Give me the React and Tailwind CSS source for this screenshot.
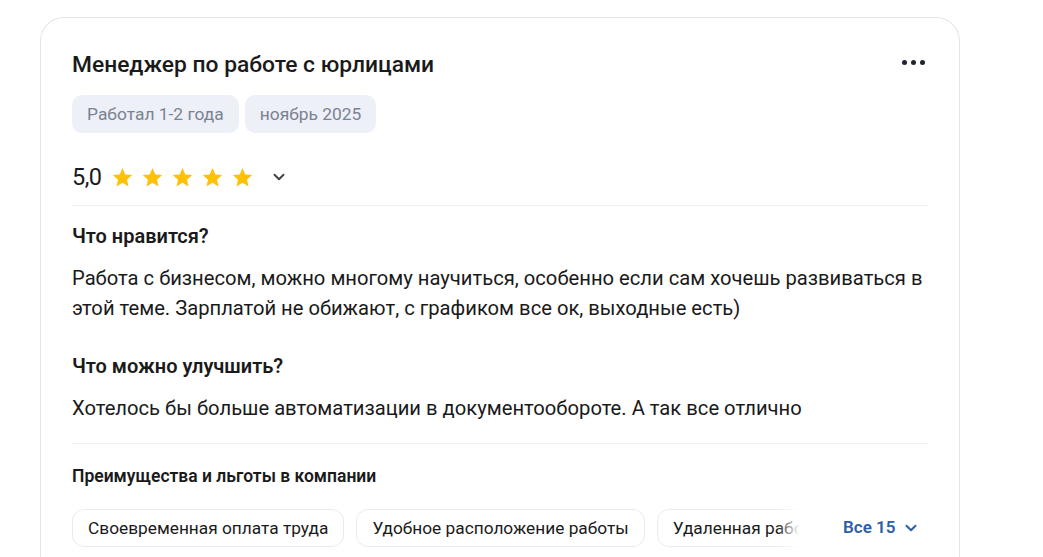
import React from 'react'

const Star = () => (
  <svg width="23" height="23" viewBox="0 0 24 24" className="shrink-0">
    <path d="M12 2.2l2.95 6.6 7.2.7-5.45 4.8 1.6 7.05L12 17.6l-6.3 3.75 1.6-7.05L1.85 9.5l7.2-.7z" fill="#ffc107" />
  </svg>
)

const Chevron = ({ className, color }) => (
  <svg width="14" height="14" viewBox="0 0 14 14" className={className}>
    <path d="M2.5 4.8L7 9.2l4.5-4.4" fill="none" stroke={color} strokeWidth="2" strokeLinecap="round" strokeLinejoin="round" />
  </svg>
)

const benefits = [
  'Своевременная оплата труда',
  'Удобное расположение работы',
  'Удаленная работа',
  'Обучение за счет компании',
]

const App = () => {
  return (
    <div className="min-h-screen bg-white pt-[17px] pl-[40px] text-[#1a1a1a]" style={{ fontFamily: 'Roboto, "Noto Sans", sans-serif' }}>
      <div className="w-[920px] rounded-t-[24px] border border-b-0 border-[#e1e4ee] px-[31px] pt-[33px] pb-4">
        <div className="flex items-start justify-between">
          <h1 className="text-[22.8px] leading-[28px] font-medium">Менеджер по работе с юрлицами</h1>
          <button className="mt-[9px] mr-[3px] flex gap-[4px]">
            <span className="h-[5px] w-[5px] rounded-full bg-[#1f2430]" />
            <span className="h-[5px] w-[5px] rounded-full bg-[#1f2430]" />
            <span className="h-[5px] w-[5px] rounded-full bg-[#1f2430]" />
          </button>
        </div>

        <div className="mt-[16px] flex gap-[6px]">
          <span className="h-[38px] rounded-[10px] bg-[#edf0f7] px-[15px] text-[17.4px] leading-[38px] text-[#7b8291]">Работал 1-2 года</span>
          <span className="h-[38px] rounded-[10px] bg-[#edf0f7] px-[15px] text-[17.4px] leading-[38px] text-[#7b8291]">ноябрь 2025</span>
        </div>

        <div className="mt-[30px] flex h-[28px] items-center">
          <span className="text-[23.5px] leading-[28px] tracking-[-0.5px]">5,0</span>
          <div className="ml-[9px] flex gap-[7px]">
            <Star /><Star /><Star /><Star /><Star />
          </div>
          <Chevron className="ml-[18px]" color="#444" />
        </div>

        <div className="mt-[14px] h-px bg-[#eef0f3]" />

        <h2 className="mt-[18px] text-[20px] leading-[24px] font-semibold">Что нравится?</h2>
        <p className="mt-[15px] text-[20.2px] leading-[30px]">
          Работа с бизнесом, можно многому научиться, особенно если сам хочешь развиваться в этой теме. Зарплатой не обижают, с графиком все ок, выходные есть)
        </p>

        <h2 className="mt-[31px] text-[20px] leading-[24px] font-semibold">Что можно улучшить?</h2>
        <p className="mt-[15px] text-[20.2px] leading-[30px]">
          Хотелось бы больше автоматизации в документообороте. А так все отлично
        </p>

        <div className="mt-[20px] h-px bg-[#eef0f3]" />

        <h3 className="mt-[21px] text-[17.5px] leading-[22px] font-semibold">Преимущества и льготы в компании</h3>

        <div className="mt-[22px] flex items-center">
          <div className="relative w-[755px] overflow-hidden">
            <div className="flex gap-[12px]">
              {benefits.map((b) => (
                <span key={b} className="h-[38px] shrink-0 whitespace-nowrap rounded-[12px] border border-[#e8ebf3] px-[15px] text-[17.3px] leading-[36px]">
                  {b}
                </span>
              ))}
            </div>
            <div className="absolute inset-y-0 right-0 w-[50px] bg-gradient-to-r from-white/0 to-white to-45%" />
          </div>
          <button className="ml-[16px] flex items-center gap-[9px] text-[17px] font-semibold text-[#2d5ea8]">
            Все 15
            <Chevron color="#2d5ea8" />
          </button>
        </div>
      </div>
    </div>
  )
}

export default App
